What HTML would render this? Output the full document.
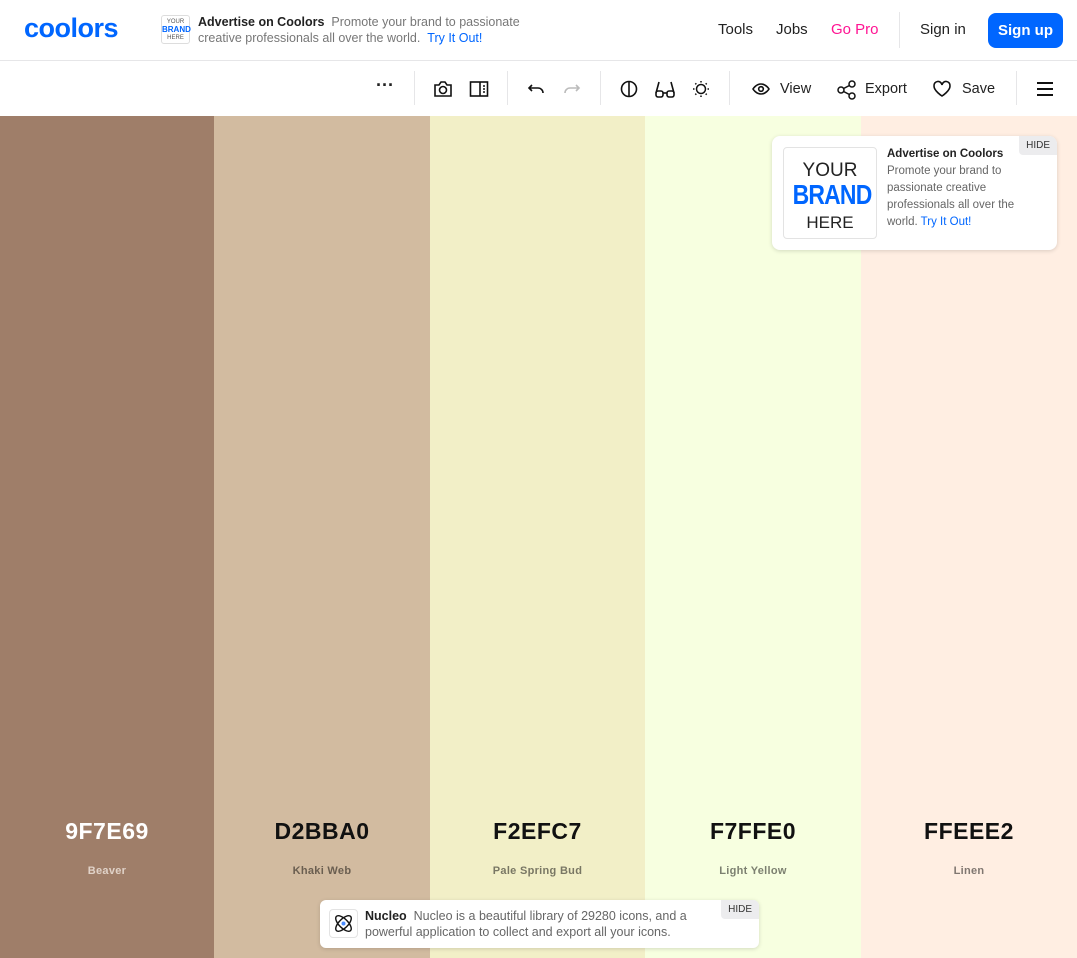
<!DOCTYPE html>
<html><head><meta charset="utf-8"><style>
*{box-sizing:border-box;margin:0;padding:0}
body{width:1077px;height:958px;overflow:hidden;font-family:"Liberation Sans",sans-serif;background:#fff;position:relative}
.hdr{position:absolute;top:0;left:0;width:1077px;height:61px;border-bottom:1px solid #e6e6e8}
.logo{position:absolute;left:24px;top:13px;font-size:27px;font-weight:bold;color:#0066ff;letter-spacing:-0.5px}
.adbox{position:absolute;left:161px;top:15px;width:29px;height:29px;border:1px solid #ddd;border-radius:3px;font-size:6px;text-align:center;line-height:7px;color:#555;padding-top:3px}
.adtxt{position:absolute;left:198px;top:14px;font-size:12.5px;line-height:16px;color:#777;width:340px}
.adtxt b{color:#222;font-weight:bold}
.blue{color:#0066ff}
.nav{position:absolute;top:21px;font-size:15px;color:#222}
.signup{position:absolute;left:988px;top:13px;width:75px;height:35px;background:#0066ff;color:#fff;border-radius:8px;font-weight:bold;font-size:15px;text-align:center;line-height:35px}
.tb{position:absolute;top:61px;left:0;width:1077px;height:55px}
.sep{position:absolute;top:10px;width:1px;height:34px;background:#e6e6e8}
.ic{position:absolute;top:19px}
.tl{position:absolute;top:20px;font-size:14.5px;color:#222}
.col{position:absolute;top:116px;height:842px}
.hex{position:absolute;top:702px;width:100%;text-align:center;font-size:23px;font-weight:bold;letter-spacing:0.5px}
.nm{position:absolute;top:749px;width:100%;text-align:center;font-size:11px;font-weight:bold;letter-spacing:0.3px}
.card{position:absolute;left:772px;top:136px;width:285px;height:114px;background:#fff;border-radius:8px;box-shadow:0 1px 4px rgba(0,0,0,.15)}
.hide{position:absolute;right:0;top:0;background:#ececee;font-size:10px;color:#333;padding:4px 7px;border-radius:0 8px 0 4px}
.nuc{position:absolute;left:320px;top:900px;width:439px;height:48px;background:#fff;border-radius:6px;box-shadow:0 1px 4px rgba(0,0,0,.15)}
</style></head><body>
<div class="hdr">
<div class="logo">coolors</div>
<div class="adbox">YOUR<br><span style="color:#0066ff;font-weight:bold;font-size:8px">BRAND</span><br>HERE</div>
<div class="adtxt"><b>Advertise on Coolors</b>&nbsp; Promote your brand to passionate creative professionals all over the world. &nbsp;<span class="blue">Try It Out!</span></div>
<div class="nav" style="left:718px">Tools</div>
<div class="nav" style="left:776px">Jobs</div>
<div class="nav" style="left:831px;color:#ff1493">Go Pro</div>
<div style="position:absolute;left:899px;top:12px;width:1px;height:36px;background:#e6e6e8"></div>
<div class="nav" style="left:920px">Sign in</div>
<div class="signup">Sign up</div>
</div>
<div class="tb">
<div class="tl" style="left:376px;top:14px;font-size:18px;font-weight:bold">···</div>
<div class="sep" style="left:414px"></div>
<svg class="ic" style="left:433px" width="20" height="18" viewBox="0 0 20 18" fill="none" stroke="#111" stroke-width="1.6"><path d="M2 5h4l2-3h4l2 3h4v11H2z"/><circle cx="10" cy="10" r="3.5"/></svg>
<svg class="ic" style="left:469px" width="20" height="18" viewBox="0 0 20 18" fill="none" stroke="#111" stroke-width="1.6"><rect x="1.5" y="2" width="17" height="14"/><path d="M11 2v14M14 6h2M14 9h2M14 12h2"/></svg>
<div class="sep" style="left:507px"></div>
<svg class="ic" style="left:527px" width="18" height="18" viewBox="0 0 18 18" fill="none" stroke="#111" stroke-width="1.6"><path d="M5 5L2 8l3 3M2 8h9a5 5 0 0 1 5 5"/></svg>
<svg class="ic" style="left:563px" width="18" height="18" viewBox="0 0 18 18" fill="none" stroke="#bbb" stroke-width="1.6"><path d="M13 5l3 3-3 3M16 8H7a5 5 0 0 0-5 5"/></svg>
<div class="sep" style="left:600px"></div>
<svg class="ic" style="left:619px" width="20" height="20" viewBox="0 0 20 20" fill="none" stroke="#111" stroke-width="1.6"><circle cx="10" cy="9" r="7.5"/><path d="M10 1.5v15"/></svg>
<svg class="ic" style="left:654px" width="22" height="20" viewBox="0 0 22 20" fill="none" stroke="#111" stroke-width="1.6"><path d="M5 2L2 13M17 2l3 11"/><rect x="2" y="11" width="7" height="6" rx="2"/><rect x="13" y="11" width="7" height="6" rx="2"/><path d="M9 13h4"/></svg>
<svg class="ic" style="left:691px" width="20" height="20" viewBox="0 0 20 20" fill="none" stroke="#111" stroke-width="1.5"><circle cx="10" cy="9" r="4.5"/><path d="M10 1v1.5M10 15.5V17M2 9h1.5M16.5 9H18M4.3 3.3l1 1M14.7 13.7l1 1M4.3 14.7l1-1M14.7 4.3l1-1"/></svg>
<div class="sep" style="left:729px"></div>
<svg class="ic" style="left:752px;top:21px" width="18" height="14" viewBox="0 0 18 14" fill="none" stroke="#111" stroke-width="1.6"><path d="M1 7s3-5 8-5 8 5 8 5-3 5-8 5-8-5-8-5z"/><circle cx="9" cy="7" r="2.3"/></svg>
<div class="tl" style="left:780px">View</div>
<svg class="ic" style="left:836px" width="22" height="20" viewBox="0 0 22 20" fill="none" stroke="#111" stroke-width="1.5"><circle cx="5" cy="10" r="3"/><circle cx="16" cy="4" r="3"/><circle cx="16" cy="16" r="3"/><path d="M7.6 8.5l5.8-3M7.6 11.5l5.8 3"/></svg>
<div class="tl" style="left:865px">Export</div>
<svg class="ic" style="left:932px" width="20" height="18" viewBox="0 0 20 18" fill="none" stroke="#111" stroke-width="1.6"><path d="M10 16S2 11 2 6a4 4 0 0 1 8-1 4 4 0 0 1 8 1c0 5-8 10-8 10z"/></svg>
<div class="tl" style="left:962px">Save</div>
<div class="sep" style="left:1016px"></div>
<svg class="ic" style="left:1036px;top:20px" width="18" height="16" viewBox="0 0 18 16" stroke="#111" stroke-width="2"><path d="M1 2h16M1 8h16M1 14h16"/></svg>
</div>
<div class="col" style="left:0;width:214px;background:#9f7e69;color:#fff"><div class="hex">9F7E69</div><div class="nm" style="color:#e0d2c8">Beaver</div></div>
<div class="col" style="left:214px;width:216px;background:#d2bba0;color:#111"><div class="hex">D2BBA0</div><div class="nm" style="color:#6a5e50">Khaki Web</div></div>
<div class="col" style="left:430px;width:215px;background:#f2efc7;color:#111"><div class="hex">F2EFC7</div><div class="nm" style="color:#797764">Pale Spring Bud</div></div>
<div class="col" style="left:645px;width:216px;background:#f7ffe0;color:#111"><div class="hex">F7FFE0</div><div class="nm" style="color:#7c8070">Light Yellow</div></div>
<div class="col" style="left:861px;width:216px;background:#ffeee2;color:#111"><div class="hex">FFEEE2</div><div class="nm" style="color:#807771">Linen</div></div>
<div class="card">
<div style="position:absolute;left:11px;top:11px;width:94px;height:92px;border:1px solid #e3e3e3;border-radius:4px;text-align:center;padding-top:11px;color:#222;font-size:19px;line-height:24px">YOUR<br><span style="color:#0066ff;font-weight:bold;font-size:28px;letter-spacing:-1px;display:inline-block;transform:scaleX(0.82)">BRAND</span><br><span style="font-size:17px;line-height:20px">HERE</span></div>
<div style="position:absolute;left:115px;top:10px;width:160px;font-size:11.5px;line-height:17px;color:#666"><b style="color:#222">Advertise on Coolors</b><br>Promote your brand to passionate creative professionals all over the world. <span class="blue">Try It Out!</span></div>
<div class="hide">HIDE</div>
</div>
<div class="nuc">
<div style="position:absolute;left:9px;top:9px;width:29px;height:29px;border:1px solid #e3e3e3;border-radius:4px"><svg width="27" height="27" viewBox="0 0 27 27" fill="none" stroke="#111" stroke-width="1.4"><ellipse cx="13.5" cy="13.5" rx="10" ry="4.5" transform="rotate(45 13.5 13.5)"/><ellipse cx="13.5" cy="13.5" rx="10" ry="4.5" transform="rotate(-45 13.5 13.5)"/><circle cx="13.5" cy="13.5" r="2" fill="#4a8cff" stroke="none"/></svg></div>
<div style="position:absolute;left:45px;top:8px;width:350px;font-size:12.5px;line-height:16px;color:#666"><b style="color:#222">Nucleo</b>&nbsp; Nucleo is a beautiful library of 29280 icons, and a powerful application to collect and export all your icons.</div>
<div class="hide" style="border-radius:0 6px 0 4px">HIDE</div>
</div>
</body></html>
